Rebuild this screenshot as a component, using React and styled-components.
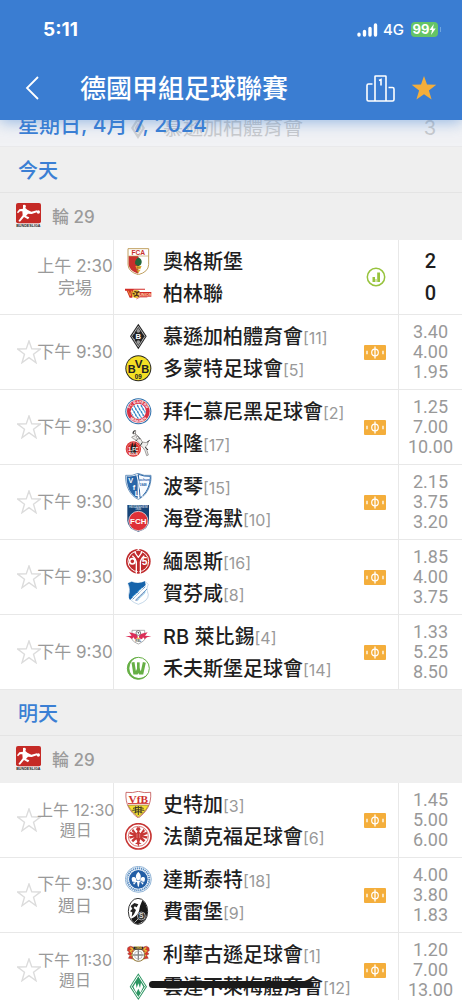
import React, { useState } from 'react';
import styled, { createGlobalStyle } from 'styled-components';

const GlobalStyle = createGlobalStyle`
    * {
        box-sizing: border-box;
    }
    body {
        margin: 0;
        background-color: #fff;
        font-family: Inter, "Noto Sans CJK TC", sans-serif;
        color: #1e1e1e;
    }
    button {
        display: flex;
        padding: 0;
        border: 0;
        background: none;
        cursor: pointer;
    }
    h1, h2, h3, ul {
        margin: 0;
        padding: 0;
        list-style: none;
    }
    svg {
        display: block;
        flex-shrink: 0;
    }
`

const Screen = styled.div`
    height: 100vh;
    overflow: hidden;
`

const Header = styled.header`
    position: relative;
    z-index: 2;
    padding-bottom: 3px;
    background-color: #3a7dd2;
    color: #fff;
    box-shadow: 0 2px 14px rgba(58, 125, 210, 0.5);
`

const StatusBar = styled.div`
    display: flex;
    align-items: center;
    height: 59px;
    padding: 0 21px 0 43px;
`

const Clock = styled.span`
    margin-right: auto;
    font-size: 19px;
    font-weight: 700;
`

const Network = styled.span`
    margin: 0 7px 0 5px;
    font-size: 15px;
    font-weight: 500;
`

const Battery = styled.span`
    display: flex;
    align-items: center;
    justify-content: center;
    width: 27px;
    height: 15px;
    border-radius: 4px;
    background-color: #65c466;
    font-size: 13px;
    font-weight: 700;
    line-height: 15px;
`

const BatteryTip = styled.span`
    width: 1px;
    height: 5px;
    margin-left: 2px;
    background-color: #6fa6e0;
`

const NavBar = styled.nav`
    display: flex;
    align-items: center;
    height: 58px;
    padding: 0 25px;
`

const Title = styled.h1`
    flex: 1;
    margin-left: 41px;
    padding-top: 2px;
    font-size: 26px;
    font-weight: 500;
    line-height: 36px;
`

const NavActions = styled.div`
    display: flex;
    align-items: center;
    gap: 16px;
`

const StickyDate = styled.div`
    position: relative;
    height: 27px;
    overflow: hidden;
    border-bottom: 1px solid #e9e9eb;
    background-color: #f1f2f5;
`

const DateText = styled.h2`
    position: relative;
    margin-top: -10px;
    padding-left: 18px;
    color: #3b7fd4;
    font-size: 21px;
    font-weight: 500;
    line-height: 30px;
`

const PassedRow = styled.div`
    position: absolute;
    inset: -7px 0 auto 0;
    display: flex;
    align-items: center;
    padding: 0 26px 0 131px;
    color: #c9cacc;
    font-size: 20px;
    line-height: 30px;

    span {
        flex: 1;
        margin-left: 18px;
    }
`

const DayTitle = styled.h2`
    height: 46px;
    padding-left: 18px;
    border-bottom: 1px solid #e4e4e4;
    background-color: #efefef;
    color: #3b7fd4;
    font-size: 20px;
    font-weight: 500;
    line-height: 48px;
`

const RoundTitle = styled.h3`
    display: flex;
    align-items: center;
    gap: 11px;
    height: 47px;
    padding: 0 0 2px 16px;
    background-color: #efefef;
    color: #9b9b9b;
    font-size: 17px;
    font-weight: 500;
`

const Match = styled.li`
    display: grid;
    grid-template-columns: 114px 1fr 64px;
    height: 75px;
    border-bottom: 1px solid #e8e8e8;
`

const TimeCell = styled.div`
    display: flex;
    align-items: center;
    padding-left: 17px;
    border-right: 1px solid #e8e8e8;
`

const StarSlot = styled.div`
    flex: 0 0 20px;
    min-width: 0;
    height: 24px;
`

const Times = styled.div`
    flex: 1;
    display: flex;
    flex-direction: column;
    align-items: center;
    color: #999;
    font-size: ${props => props.$small ? 16 : 17}px;
    line-height: ${props => props.$small ? 20 : 22}px;
    white-space: nowrap;
`

const Teams = styled.div`
    display: flex;
    align-items: center;
    padding: 0 12px 0 11px;
`

const TeamList = styled.div`
    flex: 1;
`

const TeamLine = styled.div`
    display: flex;
    align-items: center;
    gap: 11px;
    height: 32px;
    white-space: nowrap;
`

const TeamName = styled.span`
    padding-top: 2px;
    font-size: 20px;
    font-weight: 500;
    line-height: 32px;
`

const Rank = styled.span`
    color: #999;
    font-size: 16px;
    font-weight: 400;
`

const Odds = styled.div`
    display: flex;
    flex-direction: column;
    align-items: center;
    justify-content: center;
    border-left: 1px solid #e8e8e8;
    color: #999;
    font-family: Roboto, sans-serif;
    font-size: 18px;
    line-height: 20px;
`

const Score = styled(Odds)`
    color: #1e1e1e;
    font-size: 20px;
    font-weight: 500;
    line-height: 32px;
`

const HomeIndicator = styled.div`
    position: fixed;
    bottom: 12px;
    left: 50%;
    z-index: 3;
    width: 164px;
    height: 7px;
    margin-left: -82px;
    border-radius: 4px;
    background-color: #1a1a1a;
`

const Crest = ({ children }) => (
    <svg width="27" height="27" viewBox="0 0 81 81" aria-hidden="true">{children}</svg>
)

const label = (x, y, size, fill, text, extra) => (
    <text x={x} y={y} fontSize={size} fill={fill} textAnchor="middle" fontWeight="700" fontFamily="Liberation Sans, sans-serif" {...extra}>{text}</text>
)

const crests = {
    augsburg: (
        <Crest>
            <path d="M9 2H71V50Q70 72 40 80Q10 72 9 50Z" fill="#fff" stroke="#c0a060" strokeWidth="3" />
            <path d="M11 24H40V77Q12 69 11 49Z" fill="#c8302c" />
            <path d="M11 24H70" stroke="#c0a060" strokeWidth="2" />
            {label(40, 20, 20, '#c8302c', 'FCA')}
            <path d="M40 28C50 33 53 42 47 51L40 55L31 49C28 40 33 34 40 28Z" fill="#23663b" />
            <path d="M31 54H50L46 63H35ZM34 65H47L40 75Z" fill="#e3ae38" />
            <path d="M35 59H46M38 55V73" stroke="#9e7825" strokeWidth="2" />
        </Crest>
    ),
    union: (
        <Crest>
            <path d="M0 26H60V29H26L22 53H14L5 32H0Z" fill="#d22d27" />
            <path d="M9 32L16 47L20 32M29 33H40" stroke="#f2cf49" strokeWidth="2" fill="none" />
            <circle cx="33" cy="42" r="12" fill="#e9bd2e" />
            <path d="M28 34L36 37L35 45L27 49M37 38L43 34M35 45L42 49M23 40L29 42" fill="none" stroke="#52301d" strokeWidth="4" />
            <path d="M43 36H79V50H43Z" fill="#d22d27" />
            {label(61, 48, 12, '#ffd4b2', 'UNION')}
            <path d="M34 57L45 51H67" fill="none" stroke="#d22d27" strokeWidth="2" />
        </Crest>
    ),
    gladbach: (
        <Crest>
            <path d="M40 2L65 40L40 79L15 40Z" fill="#222" />
            <path d="M40 10L60 40L40 71L20 40Z" fill="none" stroke="#fff" strokeWidth="2" />
            <path d="M40 15L46 24L40 33L34 24ZM40 48L46 57L40 66L34 57Z" fill="#999" />
            <path d="M27 29L53 51M53 29L27 51" stroke="#bbb" strokeWidth="2" />
            <rect x="30" y="29" width="21" height="23" fill="#222" />
            {label(40, 48, 23, '#fff', 'B')}
        </Crest>
    ),
    dortmund: (
        <Crest>
            <circle cx="40" cy="40" r="39" fill="#27261f" />
            <circle cx="40" cy="40" r="36" fill="#f4df24" />
            {label(20, 53, 33, '#222', 'B')}
            {label(41, 39, 35, '#222', 'V')}
            {label(61, 53, 33, '#222', 'B')}
            {label(40, 72, 19, '#222', '09')}
        </Crest>
    ),
    bayern: (
        <Crest>
            <circle cx="40" cy="40" r="39" fill="#286ca9" />
            <circle cx="40" cy="40" r="36" fill="#fff" />
            <circle cx="40" cy="40" r="34" fill="#d83043" />
            <path id="bayernTop" d="M14 41A26 26 0 0 1 66 41" fill="none" />
            <path id="bayernBottom" d="M8 41A32 32 0 0 0 72 41" fill="none" />
            <text fontSize="11" fontWeight="700" fill="#fff" fontFamily="Liberation Sans, sans-serif" textAnchor="middle"><textPath href="#bayernTop" startOffset="50%">FC BAYERN</textPath></text>
            <text fontSize="11" fontWeight="700" fill="#fff" fontFamily="Liberation Sans, sans-serif" textAnchor="middle"><textPath href="#bayernBottom" startOffset="50%">MÜNCHEN</textPath></text>
            <circle cx="40" cy="40" r="23" fill="#fff" />
            <clipPath id="bayernCore"><circle cx="40" cy="40" r="22" /></clipPath>
            <g clipPath="url(#bayernCore)" fill="#3988c7">
                {[0, 1, 2, 3, 4].map(row => [0, 1, 2, 3, 4].map(col => {
                    const x = 13 + col * 11 + row % 2 * 5
                    const y = 19 + row * 9
                    return <path key={`${row}${col}`} d={`M${x} ${y}L${x + 5} ${y + 3}L${x + 8} ${y + 12}L${x + 2} ${y + 8}Z`} />
                }))}
            </g>
        </Crest>
    ),
    koln: (
        <Crest>
            <path d="M32 2Q20 3 24 12L31 10L37 17L33 22L38 26L47 27L52 36L63 38L70 34L67 45L61 51L66 62L70 75L65 77L60 62L54 53L46 46L41 37L33 30L23 25L20 21L31 17Z" fill="#eeeeec" stroke="#77716f" strokeWidth="2" strokeLinejoin="round" />
            <path d="M31 2Q23 2 25 11M37 17L46 27M52 37L46 47M67 36L74 31M61 51L69 60M37 28L32 33" fill="none" stroke="#333" strokeWidth="3" />
            <circle cx="25" cy="57" r="23" fill="#d92d2c" />
            <circle cx="25" cy="57" r="19" fill="none" stroke="#fff" strokeWidth="1" />
            <path d="M17 70V55L22 36L26 50L31 36L34 55V70Z" fill="#222" />
            {label(25, 62, 14, '#fff', '1.FC')}
            {label(25, 76, 9, '#fff', 'KÖLN')}
        </Crest>
    ),
    bochum: (
        <Crest>
            <path d="M2 7Q22 10 39 1Q57 10 78 7C80 39 64 69 40 79C16 69 0 39 2 7Z" fill="#fff" stroke="#2e66a0" strokeWidth="2" />
            <path d="M5 10Q23 12 38 5V76C16 66 4 39 5 10Z" fill="#2a66a8" />
            <path d="M40 4Q57 11 76 10C77 36 63 64 45 74Z" fill="#f7faff" stroke="#2a66a8" strokeWidth="3" />
            {label(17, 30, 22, '#fff', 'V')}
            {label(27, 52, 22, '#fff', 'f')}
            {label(36, 70, 22, '#fff', 'L')}
            {label(55, 25, 10, '#2a66a8', 'Bochum')}
            {label(54, 38, 10, '#2a66a8', '1848')}
            <path d="M35 5L52 73" stroke="#fff" strokeWidth="3" />
        </Crest>
    ),
    heidenheim: (
        <Crest>
            <path d="M7 0H72V47Q72 71 40 80Q8 71 7 47Z" fill="#174477" />
            {label(40, 8, 9, '#b9c9dd', 'HEIDENHEIM')}
            {label(40, 16, 8, '#b9c9dd', '1846')}
            <circle cx="40" cy="48" r="29" fill="#df3038" stroke="#fff" strokeWidth="2" />
            {label(40, 57, 24, '#fff', 'FCH')}
        </Crest>
    ),
    mainz: (
        <Crest>
            <circle cx="40" cy="40" r="37" fill="#c02b2d" />
            <circle cx="40" cy="40" r="31" fill="none" stroke="#fff" strokeWidth="3" />
            <path d="M34 77V47Q35 34 22 23M46 77V47Q45 34 58 23M40 5L30 14L40 28L50 14Z" fill="none" stroke="#fff" strokeWidth="4" />
            <path d="M31 8L40 24L49 8ZM38 31H43V75H38Z" fill="#c02b2d" />
            <circle cx="22" cy="40" r="8" fill="none" stroke="#fff" strokeWidth="5" />
            {label(59, 52, 31, '#fff', '5')}
        </Crest>
    ),
    hoffenheim: (
        <Crest>
            <path d="M9 10L20 5Q40 14 60 4L70 14C64 23 66 32 70 44Q70 63 40 73Q12 63 11 46Q18 27 9 10Z" fill="#fff" stroke="#a8c4de" strokeWidth="2" />
            <path d="M9 10L20 5Q40 14 60 4L62 15L15 60Q10 53 12 45Q18 27 9 10Z" fill="#1764ab" />
            <path d="M23 58L61 20M31 61L66 27" stroke="#2a70b0" strokeWidth="2" />
            {label(38, 42, 9, '#fff', 'TSG 1899', { transform: 'rotate(-45 38 38)' })}
            {label(46, 51, 7, '#2a70b0', 'Hoffenheim', { transform: 'rotate(-45 46 47)' })}
        </Crest>
    ),
    leipzig: (
        <Crest>
            <path d="M21 22H59V50Q52 58 40 63Q27 58 21 50Z" fill="#fff" stroke="#888" strokeWidth="2" />
            <path d="M1 40L20 38L12 28L25 31Q34 31 38 39V46L29 49L26 43L20 48L14 43ZM79 40L60 38L68 28L55 31Q46 31 42 39V46L51 49L54 43L60 48L66 43Z" fill="#db2f58" />
            <circle cx="40" cy="30" r="7" fill="#fff" stroke="#45474c" strokeWidth="2" />
            <path d="M37 27L43 28L41 33Z" fill="#45474c" />
            <path d="M35 44H45L43 49H37Z" fill="#f2c94f" />
            {label(40, 58, 9, '#565b66', 'RBL')}
        </Crest>
    ),
    wolfsburg: (
        <Crest>
            <circle cx="40" cy="40" r="33" fill="#fff" stroke="#66af45" strokeWidth="3" />
            <path d="M40 7A33 33 0 1 0 68 57Q57 69 40 69Q14 66 13 40Q14 14 40 7Z" fill="#66af45" />
            <path d="M24 22L29 54H35L40 43L45 54H51L58 22" fill="none" stroke="#66af45" strokeWidth="9" />
            <path d="M40 22V45" stroke="#66af45" strokeWidth="8" />
        </Crest>
    ),
    stuttgart: (
        <Crest>
            <path d="M3 4Q23 7 40 1Q57 7 77 4C80 41 63 64 40 81C16 64 0 41 3 4Z" fill="#fff" stroke="#b42b2a" strokeWidth="2" />
            <path d="M9 43H71Q60 65 40 78Q20 65 9 43Z" fill="#f5df31" stroke="#9b812a" strokeWidth="2" />
            {label(40, 35, 34, '#cf302d', 'VfB', { fontFamily: 'Liberation Serif, serif' })}
            <path d="M9 38H71" stroke="#cf302d" strokeWidth="3" />
            <path d="M24 52Q40 45 56 52M22 58Q40 54 58 58M28 64Q40 60 52 64M32 46V67M40 45V72M48 46V67" fill="none" stroke="#3d3a29" strokeWidth="3" />
        </Crest>
    ),
    frankfurt: (
        <Crest>
            <circle cx="40" cy="40" r="38" fill="#fff" stroke="#c73634" strokeWidth="5" />
            <circle cx="40" cy="40" r="30" fill="none" stroke="#c73634" strokeWidth="2" />
            <path d="M36 13H44L47 20L42 24L46 31L56 17L60 24L53 31L65 26L67 33L54 38L68 40L65 47L51 43L61 52L56 58L46 49L43 58L50 63H43L40 71L37 63H30L37 57L34 49L24 58L19 52L29 43L15 47L12 40L26 38L13 33L15 26L27 31L20 24L24 17L34 31L38 24L33 20Z" fill="#c73634" />
            <path d="M36 32V45M44 32V45" stroke="#fff" strokeWidth="1" />
        </Crest>
    ),
    darmstadt: (
        <Crest>
            <circle cx="40" cy="40" r="39" fill="#fff" stroke="#5e91c3" strokeWidth="2" />
            <circle cx="40" cy="40" r="33" fill="none" stroke="#5b8fc4" strokeWidth="6" strokeDasharray="4 2" />
            <circle cx="40" cy="40" r="28" fill="#235fa6" />
            <path d="M40 17Q54 31 43 43H37Q26 31 40 17ZM22 47Q16 31 28 33Q36 36 34 47ZM58 47Q64 31 52 33Q44 36 46 47ZM28 44H52V48H28ZM36 48H44L42 59L40 64L38 59ZM34 48L27 56L24 50ZM46 48L53 56L56 50Z" fill="#fff" />
        </Crest>
    ),
    freiburg: (
        <Crest>
            <ellipse cx="39" cy="40" rx="29" ry="39" fill="#fff" stroke="#333" strokeWidth="3" />
            <path d="M52 7Q67 18 67 42Q66 69 39 78Q25 75 18 62Q35 57 42 40Q44 23 52 7Z" fill="#191919" />
            <path d="M17 24L28 15L40 19L35 28L29 25L26 30L33 36L27 49L20 56L22 43L15 40L22 32Z" fill="#222" />
            <circle cx="49" cy="54" r="12" fill="#333" stroke="#ddd" strokeWidth="2" />
            {label(49, 61, 20, '#ddd', 'S')}
            <path d="M39 63L29 73" stroke="#fff" strokeWidth="2" />
        </Crest>
    ),
    leverkusen: (
        <Crest>
            <path d="M24 18Q15 12 8 20L7 29L13 33L8 39L15 43L10 52L23 54L27 32ZM56 18Q65 12 72 20L73 29L67 33L72 39L65 43L70 52L57 54L53 32Z" fill="#d7372e" stroke="#6d2a23" strokeWidth="1" />
            <path d="M16 20L25 25L16 30L25 38L17 45M64 20L55 25L64 30L55 38L63 45M23 54Q39 64 57 54" fill="none" stroke="#e4bd36" strokeWidth="4" />
            <circle cx="40" cy="42" r="19" fill="#fff" stroke="#8b7340" strokeWidth="3" />
            <path d="M40 26V58M24 42H56" stroke="#878787" strokeWidth="4" />
            <circle cx="40" cy="42" r="12" fill="none" stroke="#a7a7a7" strokeWidth="2" />
            <path d="M25 17H55V26H25Z" fill="#282522" />
            {label(40, 25, 9, '#eed257', '1904')}
        </Crest>
    ),
    bremen: (
        <Crest>
            <path d="M40 1L66 41L40 81L14 41Z" fill="#2d9662" />
            <path d="M40 8L61 41L40 74L19 41Z" fill="none" stroke="#fff" strokeWidth="3" />
            <path d="M25 41L32 29L35 45L40 31L45 45L48 29L55 41L46 59L40 47L34 59Z" fill="#fff" />
        </Crest>
    )
}

const StarShape = ({ size, fill = 'none', stroke = 'none' }) => (
    <svg width={size} height={size} viewBox="0 0 26 26" aria-hidden="true">
        <path d="M13 1L16 9.6L25.3 9.8L17.9 15.4L20.6 24.6L13 19.2L5.4 24.6L8.1 15.4L0.7 9.8L10 9.6Z" fill={fill} stroke={stroke} strokeWidth="1.5" strokeLinejoin="miter" />
    </svg>
)

const StatsIcon = () => (
    <svg width="22" height="20" viewBox="0 0 22 20" role="img" aria-label="統計">
        <circle cx="12" cy="10" r="8.7" fill="#fff" stroke="#97c33d" strokeWidth="1.5" />
        <path d="M8.5 10H11V15H8.5ZM13.2 5.5H16V15H13.2Z" fill="#97c33d" />
        <path d="M11 12H13.2V15H11Z" fill="#cfe4a4" />
    </svg>
)

const PitchIcon = () => (
    <svg width="22" height="15" viewBox="0 0 22 15" role="img" aria-label="直播">
        <rect width="22" height="15" rx="1" fill="#f4ae3b" />
        <circle cx="11" cy="7.5" r="3.3" fill="none" stroke="#fff" strokeWidth="1.2" />
        <path d="M11 1.5V13.5M3 5.8V9.2M19 5.8V9.2" stroke="#fff" strokeWidth="1.3" />
    </svg>
)

const BundesligaLogo = () => (
    <svg width="25" height="25" viewBox="0 0 75 75" aria-hidden="true">
        <rect width="75" height="61" rx="6" fill="#c52a26" />
        <path d="M21 6Q27 3 30 9L28 15L34 20L46 26L63 22L65 27L47 33L36 32L30 39L40 43L36 49L24 42L12 56L7 54L20 37L19 25L12 25L6 31L3 28L10 19L21 17Z" fill="#fff" />
        <circle cx="67" cy="27" r="5" fill="#fff" />
        {label(37, 73, 11, '#222', 'BUNDESLIGA', { fontWeight: 900 })}
    </svg>
)

const days = [
    {
        title: '今天',
        matches: [
            { time: '上午 2:30', note: '完場', teams: [['augsburg', '奧格斯堡'], ['union', '柏林聯']], score: [2, 0] },
            { time: '下午 9:30', teams: [['gladbach', '慕遜加柏體育會', 11], ['dortmund', '多蒙特足球會', 5]], odds: ['3.40', '4.00', '1.95'] },
            { time: '下午 9:30', teams: [['bayern', '拜仁慕尼黑足球會', 2], ['koln', '科隆', 17]], odds: ['1.25', '7.00', '10.00'] },
            { time: '下午 9:30', teams: [['bochum', '波琴', 15], ['heidenheim', '海登海默', 10]], odds: ['2.15', '3.75', '3.20'] },
            { time: '下午 9:30', teams: [['mainz', '緬恩斯', 16], ['hoffenheim', '賀芬咸', 8]], odds: ['1.85', '4.00', '3.75'] },
            { time: '下午 9:30', teams: [['leipzig', 'RB 萊比錫', 4], ['wolfsburg', '禾夫斯堡足球會', 14]], odds: ['1.33', '5.25', '8.50'] }
        ]
    },
    {
        title: '明天',
        matches: [
            { time: '上午 12:30', note: '週日', small: true, teams: [['stuttgart', '史特加', 3], ['frankfurt', '法蘭克福足球會', 6]], odds: ['1.45', '5.00', '6.00'] },
            { time: '下午 9:30', note: '週日', teams: [['darmstadt', '達斯泰特', 18], ['freiburg', '費雷堡', 9]], odds: ['4.00', '3.80', '1.83'] },
            { time: '下午 11:30', note: '週日', small: true, teams: [['leverkusen', '利華古遜足球會', 1], ['bremen', '雲達不萊梅體育會', 12]], odds: ['1.20', '7.00', '13.00'] }
        ]
    }
]

const MatchRow = ({ match }) => {
    const [starred, setStarred] = useState(false)
    const { time, note, small, teams, score, odds } = match

    return (
        <Match>
            <TimeCell>
                <StarSlot>
                    {!score && (
                        <button type="button" aria-label="收藏" aria-pressed={starred} onClick={() => setStarred(!starred)}>
                            <StarShape size={24} stroke={starred ? '#f4ae3b' : '#dcdcdc'} fill={starred ? '#f4ae3b' : 'none'} />
                        </button>
                    )}
                </StarSlot>
                <Times $small={small}>
                    <span>{time}</span>
                    {note && <span>{note}</span>}
                </Times>
            </TimeCell>
            <Teams>
                <TeamList>
                    {teams.map(([crest, name, rank]) => (
                        <TeamLine key={crest}>
                            {crests[crest]}
                            <TeamName>{name}{rank && <Rank>[{rank}]</Rank>}</TeamName>
                        </TeamLine>
                    ))}
                </TeamList>
                {score ? <StatsIcon /> : <PitchIcon />}
            </Teams>
            {score
                ? <Score>{score.map((goals, i) => <span key={i}>{goals}</span>)}</Score>
                : <Odds>{odds.map((odd, i) => <span key={i}>{odd}</span>)}</Odds>}
        </Match>
    )
}

const Day = ({ day }) => (
    <section>
        <DayTitle>{day.title}</DayTitle>
        <RoundTitle>
            <BundesligaLogo />
            <span>輪 29</span>
        </RoundTitle>
        <ul>
            {day.matches.map((match, i) => <MatchRow key={i} match={match} />)}
        </ul>
    </section>
)

function App() {
    return (
        <Screen>
            <GlobalStyle />
            <Header>
                <StatusBar>
                    <Clock>5:11</Clock>
                    <svg width="21" height="14" viewBox="0 0 21 14" aria-hidden="true">
                        <path d="M2 11.2V12M7.5 8.5V12M13 5.5V12M18.5 2V12" stroke="#fff" strokeWidth="3.4" strokeLinecap="round" />
                    </svg>
                    <Network>4G</Network>
                    <Battery>
                        99
                        <svg width="7" height="11" viewBox="0 0 7 11" aria-hidden="true">
                            <path d="M4.8 0L0.5 6H3L2 11L6.7 4.6H4Z" fill="#fff" />
                        </svg>
                    </Battery>
                    <BatteryTip />
                </StatusBar>
                <NavBar>
                    <button type="button" aria-label="返回">
                        <svg width="14" height="26" viewBox="0 0 14 26" aria-hidden="true">
                            <path d="M13 2L2 13L13 24" fill="none" stroke="#fff" strokeWidth="1.8" />
                        </svg>
                    </button>
                    <Title>德國甲組足球聯賽</Title>
                    <NavActions>
                        <button type="button" aria-label="排名">
                            <svg width="29" height="27" viewBox="0 0 29 27" aria-hidden="true">
                                <path d="M9 26V1.5Q9 1 9.5 1H19.5Q20 1 20 1.5V26M6.5 9H2.5Q1 9 1 10.5V24.5Q1 26 2.5 26H26.5Q28 26 28 24.5V14Q28 12.5 26.5 12.5H22.5M13 5.5L15 4.5V10.5" fill="none" stroke="#fff" strokeWidth="1.6" />
                            </svg>
                        </button>
                        <button type="button" aria-label="收藏聯賽">
                            <StarShape size={26} fill="#f4ae3b" />
                        </button>
                    </NavActions>
                </NavBar>
            </Header>
            <main>
                <StickyDate>
                    <PassedRow>
                        <svg width="14" height="24" viewBox="0 0 14 24" aria-hidden="true">
                            <path d="M7 1L14 12L7 23L0 12Z" fill="#cfd0d2" />
                            <path d="M7 6L11 12L7 18L3 12Z" fill="none" stroke="#eee" />
                        </svg>
                        <span>慕遜加柏體育會</span>
                        3
                    </PassedRow>
                    <DateText>星期日, 4月 7, 2024</DateText>
                </StickyDate>
                {days.map(day => <Day key={day.title} day={day} />)}
            </main>
            <HomeIndicator />
        </Screen>
    )
}

export default App;
